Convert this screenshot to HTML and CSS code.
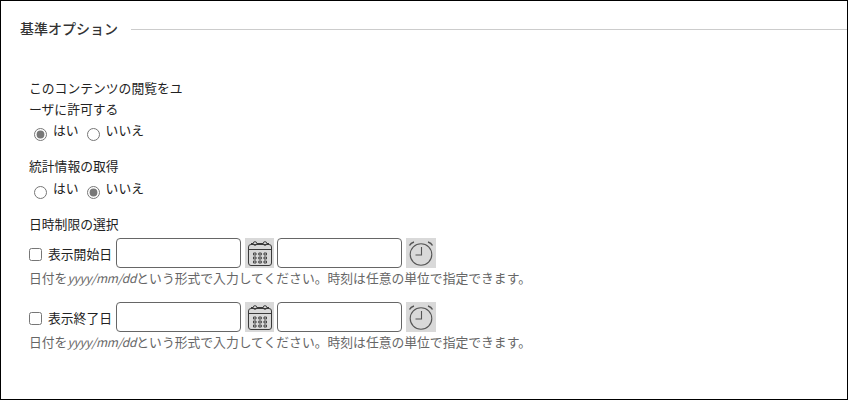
FILE: index.html
```html
<!DOCTYPE html>
<html lang="ja">
<head>
<meta charset="utf-8">
<title>基準オプション</title>
<link rel="stylesheet" href="styles.css">
</head>
<body>
<div class="frame">
  <div class="legend"><h2 class="legend-title">基準オプション</h2><span class="legend-rule"></span></div>
  <div class="fields">
    <section class="field field-first">
      <div class="label label-narrow">このコンテンツの閲覧をユーザに許可する</div>
      <div class="radios">
        <label class="radio"><input type="radio" name="a" checked><span>はい</span></label>
        <label class="radio"><input type="radio" name="a"><span>いいえ</span></label>
      </div>
    </section>
    <section class="field field-stats">
      <div class="label">統計情報の取得</div>
      <div class="radios">
        <label class="radio"><input type="radio" name="b"><span>はい</span></label>
        <label class="radio"><input type="radio" name="b" checked><span>いいえ</span></label>
      </div>
    </section>
    <section class="field field-date">
      <div class="label">日時制限の選択</div>
      <div class="date-row">
        <label class="check"><input type="checkbox"><span>表示開始日</span></label>
        <input class="text date-input" type="text">
        <span class="icon-btn"><svg width="28" height="28" viewBox="0 0 28 28" fill="none" stroke="#3a3a3a" stroke-width="1"><rect x="2.500" y="5.500" width="23" height="21" rx="2.500"/><path d="M2.500 10.500h23M5 4.500h2M11 4.500h6M21 4.500h2"/><circle cx="9" cy="4.500" r="1.800"/><circle cx="19" cy="4.500" r="1.800"/><path d="M7.500 14h2.500v2H7.500zM12.800 14h2.500v2h-2.500zM18 14h2.500v2H18zM7.500 18h2.500v2H7.500zM12.800 18h2.500v2h-2.500zM18 18h2.500v2H18zM7.500 22h2.500v2H7.500zM12.800 22h2.500v2h-2.500zM18 22h2.500v2H18z" fill="#ccc" stroke="#444" stroke-width="1"/></svg></span>
        <input class="text time-input" type="text">
        <span class="icon-btn icon-clock"><svg width="28" height="28" viewBox="0 0 28 28" fill="none" stroke="#555" stroke-width="1.100"><circle cx="14" cy="15.500" r="10.800"/><path d="M14.500 8v8H8.500"/><path d="M2.500 6.500C3.500 4.500 5 3.500 7 3M25.500 6.500C24.500 4.500 23 3.500 21 3" stroke-width="1.500"/></svg></span>
      </div>
      <p class="hint">日付を<i>yyyy/mm/dd</i>という形式で入力してください。時刻は任意の単位で指定できます。</p>
    </section>
    <section class="field field-end">
      <div class="date-row">
        <label class="check"><input type="checkbox"><span>表示終了日</span></label>
        <input class="text date-input" type="text">
        <span class="icon-btn"><svg width="28" height="28" viewBox="0 0 28 28" fill="none" stroke="#3a3a3a" stroke-width="1"><rect x="2.500" y="5.500" width="23" height="21" rx="2.500"/><path d="M2.500 10.500h23M5 4.500h2M11 4.500h6M21 4.500h2"/><circle cx="9" cy="4.500" r="1.800"/><circle cx="19" cy="4.500" r="1.800"/><path d="M7.500 14h2.500v2H7.500zM12.800 14h2.500v2h-2.500zM18 14h2.500v2H18zM7.500 18h2.500v2H7.500zM12.800 18h2.500v2h-2.500zM18 18h2.500v2H18zM7.500 22h2.500v2H7.500zM12.800 22h2.500v2h-2.500zM18 22h2.500v2H18z" fill="#ccc" stroke="#444" stroke-width="1"/></svg></span>
        <input class="text time-input" type="text">
        <span class="icon-btn icon-clock"><svg width="28" height="28" viewBox="0 0 28 28" fill="none" stroke="#555" stroke-width="1.100"><circle cx="14" cy="15.500" r="10.800"/><path d="M14.500 8v8H8.500"/><path d="M2.500 6.500C3.500 4.500 5 3.500 7 3M25.500 6.500C24.500 4.500 23 3.500 21 3" stroke-width="1.500"/></svg></span>
      </div>
      <p class="hint">日付を<i>yyyy/mm/dd</i>という形式で入力してください。時刻は任意の単位で指定できます。</p>
    </section>
  </div>
</div>
</body>
</html>
```

FILE: styles.css
```css
* { box-sizing: border-box; }
html, body { margin: 0; padding: 0; background: #fff; }
body {
  width: 848px;
  height: 400px;
  overflow: hidden;
  font-family: "Noto Sans CJK JP", "Open Sans", sans-serif;
  color: #222;
}
.frame {
  width: 848px;
  height: 400px;
  border: 1px solid #000;
  padding: 18px 0 0 19px;
}
.legend { display: flex; align-items: center; height: 18px; }
.legend-title {
  margin: 0;
  font-size: 14px;
  line-height: 18px;
  font-weight: 500;
  color: #333;
  white-space: nowrap;
}
.legend-rule { flex: 1; height: 1px; margin: 2px 0 0 13px; background: #ccc; }
.fields { padding: 40px 0 0 9px; }
.field-stats { margin-top: 13px; }
.field-stats .radios { margin-top: 3px; }
.field-date { margin-top: 13px; }
.field-end { margin-top: 15px; }
.label { font-size: 12.8px; line-height: 21px; color: #222; }
.label-narrow { width: 156px; }
.radios { display: flex; gap: 8px; padding-left: 5px; height: 21px; margin-top: 2px; align-items: center; }
.radio { display: flex; align-items: center; font-size: 12.8px; line-height: 18px; color: #222; }
.radio input { width: 13px; height: 13px; margin: 5px 6px 0 0; accent-color: #777; }
.radio span { margin-top: -3px; }
.date-row { display: flex; align-items: center; height: 30px; margin-top: 4px; }
.check { display: flex; align-items: center; width: 87px; font-size: 12.8px; color: #222; }
.check input { width: 13px; height: 13px; margin: 3px 6px 0 0; flex: none; }
.check span { white-space: nowrap; }
.text {
  height: 30px;
  border: 1px solid #666;
  border-radius: 4px;
  background: #fff;
  padding: 0 4px;
  outline: none;
}
.date-input { width: 125px; }
.time-input { width: 125px; margin-left: 3px; }
.icon-btn {
  display: flex;
  align-items: center;
  justify-content: center;
  width: 29px;
  height: 30px;
  margin-left: 4px;
  background: #d9d9d9;
}
.icon-clock { width: 30px; }
.hint { margin: 1px 0 0; font-size: 12.8px; line-height: 18px; color: #666; white-space: nowrap; }
.hint i { font-size: 12px; letter-spacing: -0.2px; }
```
